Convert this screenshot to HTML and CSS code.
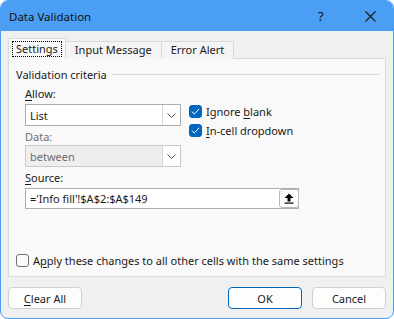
FILE: index.html
```html
<!DOCTYPE html>
<html lang="en">
<head>
    <meta charset="UTF-8">
    <title>Data Validation</title>
    <link rel="stylesheet" href="styles.css">
</head>
<body>
<div class="window">
    <div class="titlebar">
        <span class="title">Data Validation</span>
        <span class="help">?</span>
        <span class="close">
            <svg width="11" height="11" viewBox="0 0 11 11"><path d="M0.5 0.5L10.5 10.5M10.5 0.5L0.5 10.5" stroke="#1a1a1a" stroke-width="1.1" fill="none"/></svg>
        </span>
    </div>

    <div class="content">
        <div class="tabs">
            <div class="tab active"><span class="focus">Settings</span></div>
            <div class="tab">Input Message</div>
            <div class="tab">Error Alert</div>
        </div>

        <div class="panel">
            <div class="group-head">
                <span>Validation criteria</span>
                <span class="rule"></span>
            </div>

            <div class="field-label"><u>A</u>llow:</div>
            <div class="allow-row">
                <div class="select">
                    <span class="value">List</span>
                    <span class="drop"><svg width="9" height="5" viewBox="0 0 9 5"><path d="M0.5 0.5L4.5 4.5L8.5 0.5" stroke="#555" fill="none"/></svg></span>
                </div>
                <div class="checks">
                    <div class="check-row"><span class="box checked"><svg width="9" height="7" viewBox="0 0 9 7"><path d="M0.8 3.6L3.3 6L8.2 0.8" stroke="#fff" stroke-width="1" fill="none"/></svg></span><span>Ignore <u>b</u>lank</span></div>
                    <div class="check-row"><span class="box checked"><svg width="9" height="7" viewBox="0 0 9 7"><path d="M0.8 3.6L3.3 6L8.2 0.8" stroke="#fff" stroke-width="1" fill="none"/></svg></span><span><u>I</u>n-cell dropdown</span></div>
                </div>
            </div>

            <div class="field-label muted">Data:</div>
            <div class="select disabled">
                <span class="value">between</span>
                <span class="drop"><svg width="9" height="5" viewBox="0 0 9 5"><path d="M0.5 0.5L4.5 4.5L8.5 0.5" stroke="#555" fill="none"/></svg></span>
            </div>

            <div class="field-label"><u>S</u>ource:</div>
            <div class="source">
                <span class="value">='Info fill'!$A$2:$A$149</span>
                <span class="pick"><svg width="10" height="11" viewBox="0 0 10 11"><path d="M5 0.5L9.5 5H6.5V8.5H3.5V5H0.5Z" fill="#000"/><rect x="0.5" y="9.5" width="9" height="1.2" fill="#000"/></svg></span>
            </div>

            <div class="apply-row"><span class="box"></span><span>A<u>p</u>ply these changes to all other cells with the same settings</span></div>
        </div>

        <div class="footer">
            <button class="btn"><u>C</u>lear All</button>
            <span class="spacer"></span>
            <button class="btn default">OK</button>
            <button class="btn">Cancel</button>
        </div>
    </div>
</div>
</body>
</html>
```

FILE: styles.css
```css
body { margin: 0; background: #fff; font-family: "Segoe UI", "Noto Sans", sans-serif; font-size: 11px; color: #1a1a1a; }
u { text-decoration-thickness: 1px; text-underline-offset: 2px; }

.window { width: 394px; height: 319px; box-sizing: border-box; border: 1px solid #4a9ef3; border-radius: 8px; background: #f0f0f0; overflow: hidden; display: flex; flex-direction: column; }

.titlebar { height: 30px; background: #4a9ff5; display: flex; align-items: center; padding-left: 8px; flex-shrink: 0; font-size: 11.5px; }
.title { flex: 1; color: #111; }
.help { width: 12px; margin-right: 35px; font-size: 13px; color: #111; }
.close { width: 11px; height: 11px; margin-right: 17px; display: flex; }

.content { flex: 1; padding: 8px 7px 0 7px; display: flex; flex-direction: column; }

.tabs { display: flex; align-items: flex-end; height: 20px; position: relative; z-index: 1; }
.tab { height: 17px; line-height: 16px; padding: 0 9px; border: 1px solid #dadada; border-bottom: none; background: #f4f4f4; margin-left: -1px; }
.tab.active { height: 20px; line-height: 19px; margin-left: 0; padding: 0 3px; background: #f9f9f9; }
.focus { display: inline-block; line-height: 14px; padding: 0 3px; border: 1px dotted #000; }

.panel { height: 219px; box-sizing: border-box; margin-top: -1px; border: 1px solid #dadada; background: #f9f9f9; padding: 0 6px 0 7px; display: flex; flex-direction: column; }

.group-head { display: flex; align-items: center; height: 16px; margin-top: 7px; }
.group-head .rule { flex: 1; height: 1px; background: #d8d8d8; margin-left: 5px; }

.field-label { height: 16px; line-height: 16px; margin-left: 9px; }
.field-label.muted { color: #6e6e6e; }
.group-head + .field-label { margin-top: 4px; }

.allow-row { display: flex; height: 22px; margin-left: 9px; margin-top: 2px; }
.select { width: 156px; height: 22px; box-sizing: border-box; border: 1px solid #adadad; background: #fff; display: flex; align-items: center; flex-shrink: 0; }
.select .value { flex: 1; padding-left: 4px; }
.select .drop { width: 17px; height: 20px; border-left: 1px solid #d6d6d6; display: flex; align-items: center; justify-content: center; background: #fff; }
.select.disabled { margin-left: 9px; background: #eeeeee; border-color: #c8c8c8; color: #6d6d6d; }
.allow-row + .field-label { margin-top: 3px; }
.select.disabled + .field-label { margin-top: 3px; }

.checks { margin-left: 8px; margin-top: -2px; }
.check-row { display: flex; align-items: center; height: 19px; }
.box { width: 13px; height: 13px; box-sizing: border-box; border-radius: 3px; border: 1px solid #6f6f6f; background: #fafafa; margin-right: 4px; display: inline-flex; align-items: center; justify-content: center; flex-shrink: 0; }
.box.checked { background: #0067c0; border-color: #0067c0; }

.source { margin-left: 9px; margin-top: 2px; width: 274px; height: 21px; box-sizing: border-box; border: 1px solid #adadad; background: #fff; display: flex; align-items: center; }
.source .value { flex: 1; padding-left: 4px; }
.pick { width: 20px; height: 19px; box-sizing: border-box; border: 1px solid #b8b8b8; border-radius: 3px; background: #fdfdfd; display: flex; align-items: center; justify-content: center; margin-right: -1px; }

.apply-row { margin-top: auto; margin-bottom: 9px; display: flex; align-items: center; height: 14px; }

.footer { display: flex; margin-top: 10px; }
.spacer { flex: 1; }
.btn { width: 74px; height: 22px; box-sizing: border-box; border: 1px solid #d0d0d0; border-radius: 4px; background: #fdfdfd; font-family: inherit; font-size: 11px; color: #1a1a1a; padding: 0; }
.btn.default { border-color: #0067c0; margin-right: 10px; }
```
